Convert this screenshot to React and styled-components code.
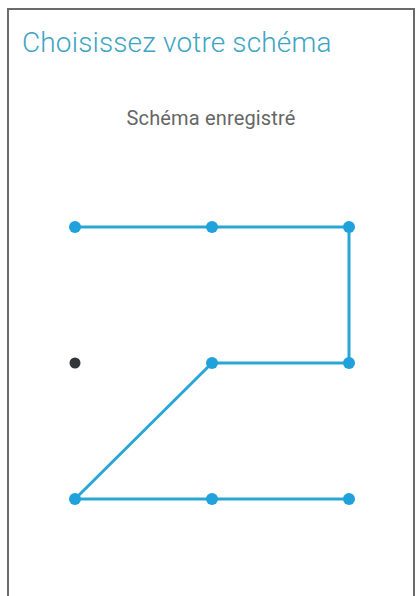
import React from 'react'
import styled, { createGlobalStyle } from 'styled-components'

const Global = createGlobalStyle`
  html, body {
    margin: 0;
    padding: 0;
    background: #ffffff;
    height: 100%;
    overflow: hidden;
  }
  #root {
    height: 100%;
  }
`

const Screen = styled.div`
  box-sizing: border-box;
  margin: 8px 3px 0 7px;
  height: calc(100vh - 8px);
  border: 2px solid #6b6b6b;
  border-bottom: none;
  background: #ffffff;
  display: flex;
  flex-direction: column;
  font-family: Roboto, "Noto Sans", sans-serif;
`

const Title = styled.h1`
  margin: 0;
  padding: 18px 0 0 13px;
  font-size: 28px;
  line-height: 30px;
  font-weight: 300;
  letter-spacing: 0.15px;
  color: #3ea4c4;
`

const Status = styled.p`
  margin: 0;
  padding-top: 48px;
  text-align: center;
  font-size: 20px;
  line-height: 24px;
  font-weight: 400;
  letter-spacing: 0.15px;
  color: #666666;
`

const Pad = styled.svg`
  display: block;
  margin: 84px auto 0;
  padding-left: 2px;
`

const cols = [13, 150, 287]
const rows = [13, 149, 285]

const path = [
  [0, 0], [1, 0], [2, 0], [2, 1], [1, 1], [0, 2], [1, 2], [2, 2],
]

function PatternPad() {
  const pts = path.map(([c, r]) => `${cols[c]},${rows[r]}`).join(' ')
  const used = new Set(path.map(([c, r]) => `${c}-${r}`))
  const dots = []
  rows.forEach((y, r) =>
    cols.forEach((x, c) => {
      const on = used.has(`${c}-${r}`)
      dots.push(
        <circle key={`${c}-${r}`} cx={x} cy={y} r={on ? 6 : 5.5} fill={on ? '#1fa2dc' : '#333638'} />
      )
    })
  )
  return (
    <Pad width="300" height="300" viewBox="0 0 300 300">
      <polyline points={pts} fill="none" stroke="#2aa6d6" strokeWidth="3" strokeLinejoin="round" />
      {dots}
    </Pad>
  )
}

export default function App() {
  return (
    <>
      <Global />
      <Screen>
        <Title>Choisissez votre schéma</Title>
        <Status>Schéma enregistré</Status>
        <PatternPad />
      </Screen>
    </>
  )
}
